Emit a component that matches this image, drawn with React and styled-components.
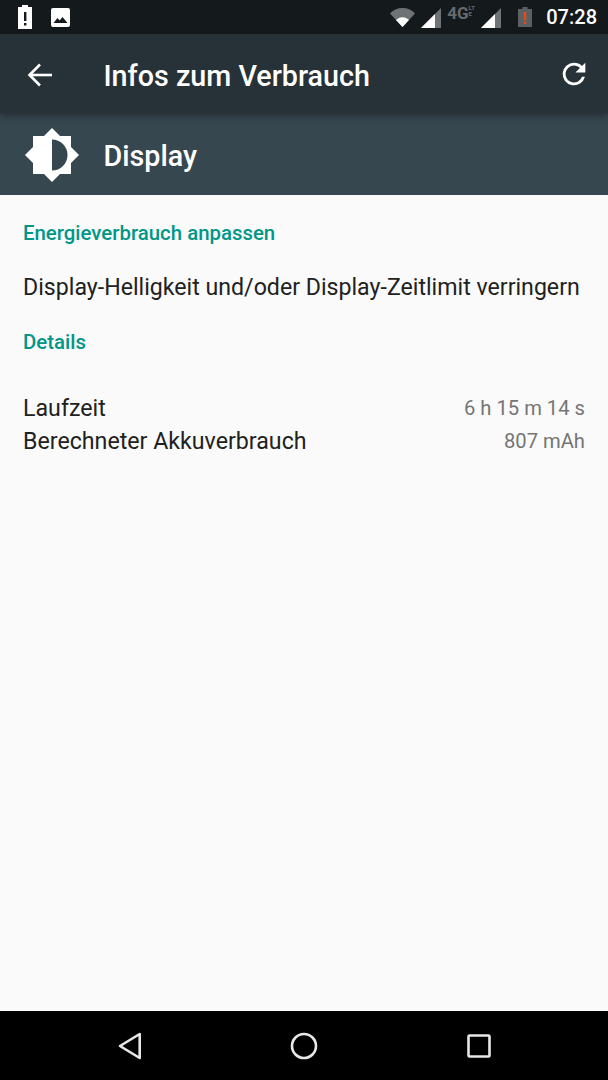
import React from 'react';
import styled, { createGlobalStyle } from 'styled-components';

const GlobalStyle = createGlobalStyle`
  html, body { margin: 0; padding: 0; background: #fafafa; }
  body { font-family: Roboto, "Noto Sans", sans-serif; }
`;

const Screen = styled.div`
  width: 608px;
  height: 1080px;
  display: flex;
  flex-direction: column;
  overflow: hidden;
  background: #fafafa;
`;

const StatusBar = styled.div`
  height: 34px;
  flex: none;
  background: #14191c;
  display: flex;
  align-items: center;
  justify-content: space-between;
  padding: 0 11px 0 17px;
`;

const StatusGroup = styled.div`
  display: flex;
  align-items: center;
  gap: ${(p) => p.$gap || 0}px;
`;

const Clock = styled.span`
  color: #fff;
  font-size: 20px;
  font-weight: 500;
  margin-left: 8px;
`;

const Toolbar = styled.div`
  height: 80px;
  flex: none;
  background: #263238;
  display: flex;
  align-items: center;
  padding: 0 17px 0 27px;
  position: relative;
  z-index: 1;
  box-shadow: 0 3px 6px rgba(0, 0, 0, 0.28);
`;

const Title = styled.h1`
  margin: 3px 0 0 50.5px;
  flex: 1;
  color: #fff;
  font-size: 28.7px;
  font-weight: 500;
`;

const Header = styled.div`
  height: 81px;
  flex: none;
  background: #37474f;
  display: flex;
  align-items: center;
  padding-left: 25px;
`;

const HeaderLabel = styled.span`
  margin: 3px 0 0 24.5px;
  color: #fff;
  font-size: 28.7px;
  font-weight: 500;
`;

const Content = styled.main`
  flex: 1;
  padding: 0 23px;
  display: flex;
  flex-direction: column;
`;

const SectionTitle = styled.h2`
  margin: ${(p) => p.$top}px 0 0;
  color: #009688;
  font-size: 20.4px;
  font-weight: 500;
  line-height: 24px;
`;

const Hint = styled.p`
  margin: 28px 0 0;
  color: #212121;
  font-size: 23.15px;
  line-height: 30px;
`;

const Rows = styled.div`
  margin-top: 39px;
  display: flex;
  flex-direction: column;
  gap: 3px;
`;

const Row = styled.div`
  display: flex;
  justify-content: space-between;
  align-items: center;
  height: 30px;
  font-size: 23.2px;
  color: #212121;
`;

const Value = styled.span`
  color: #757575;
  font-size: 20.2px;
`;

const NavBar = styled.div`
  height: 69px;
  flex: none;
  background: #000;
  display: flex;
  align-items: center;
  justify-content: space-between;
  padding: 0 117px 0 115px;
`;

const AlertBattery = () => (
  <svg width="16" height="24" viewBox="0 0 16 24">
    <path d="M5 0h6v2h4v22H1V2h4z" fill="#fff" />
    <rect x="7" y="7" width="2.4" height="9" fill="#14191c" />
    <rect x="7" y="18" width="2.4" height="2.5" fill="#14191c" />
  </svg>
);

const ImageIcon = () => (
  <svg width="19" height="19" viewBox="0 0 19 19">
    <rect width="19" height="19" rx="2" fill="#fff" />
    <path d="M2.5 15l4-5 2.2 2.4L11.5 9l5 6z" fill="#14191c" />
  </svg>
);

const Wifi = () => (
  <svg width="25" height="20" viewBox="0 0 25 20">
    <path d="M0 6.5C3 3 7.5 1 12.5 1S22 3 25 6.5L12.500 20z" fill="#6f7375" />
    <path d="M6 13c1.600-1.700 4-2.800 6.500-2.800S17.400 11.300 19 13l-6.500 7z" fill="#fff" />
  </svg>
);

const SignalSvg = styled.svg`
  margin-top: 2px;
`;

const Signal = () => (
  <SignalSvg width="20" height="20" viewBox="0 0 20 20">
    <path d="M0 20L20 0v20z" fill="#6f7375" />
    <path d="M0 20L14 6v14z" fill="#fff" />
  </SignalSvg>
);

const NetworkType = styled.span`
  color: #666a6c;
  font-size: 17px;
  font-weight: 700;
  width: 28px;
  margin-bottom: 8px;
  display: flex;
  align-items: flex-start;
`;

const Lte = styled.span`
  font-size: 6px;
  line-height: 6px;
  width: 8px;
  word-break: break-all;
  margin-top: 2px;
`;

const LowBatterySvg = styled.svg`
  margin-left: 11px;
`;

const LowBattery = () => (
  <LowBatterySvg width="14" height="20" viewBox="0 0 14 20">
    <path d="M4.500 0h5v2H14v18H0V2h4.500z" fill="#5c6062" />
    <rect x="5.800" y="5" width="2.400" height="8" fill="#e64a19" />
    <rect x="5.800" y="14.500" width="2.400" height="2.500" fill="#e64a19" />
  </LowBatterySvg>
);

const BackSvg = styled.svg`
  margin-top: 1px;
`;

const BackArrow = () => (
  <BackSvg width="26" height="24" viewBox="0 0 26 24" fill="none" stroke="#fff" strokeWidth="2.600">
    <path d="M25 12H3" />
    <path d="M13 1.500L2.500 12 13 22.500" />
  </BackSvg>
);

const Refresh = () => (
  <svg width="34" height="34" viewBox="0 0 24 24" fill="#fff">
    <path d="M17.650 6.350A7.958 7.958 0 0 0 12 4a8 8 0 1 0 7.730 10h-2.080A6 6 0 1 1 12 6c1.660 0 3.140.69 4.220 1.780L13 11h7V4l-2.350 2.350z" />
  </svg>
);

const Brightness = () => (
  <svg width="54" height="54" viewBox="0 0 54 54">
    <path d="M27 0l8 8h11v11l8 8-8 8v11H35l-8 8-8-8H8V35l-8-8 8-8V8h11z" fill="#fff" />
    <path d="M27 11.500a15.500 15.500 0 0 1 0 31z" fill="#37474f" />
  </svg>
);

const NavBack = () => (
  <svg width="26" height="28" viewBox="0 0 26 28" fill="none" stroke="#e8e8e8" strokeWidth="2.600" strokeLinejoin="round">
    <path d="M24.700 2v24L5 14z" />
  </svg>
);

const NavHome = () => (
  <svg width="28" height="28" viewBox="0 0 28 28" fill="none" stroke="#e8e8e8" strokeWidth="2.600">
    <circle cx="14" cy="14" r="12" />
  </svg>
);

const NavRecent = () => (
  <svg width="24" height="24" viewBox="0 0 24 24" fill="none" stroke="#e8e8e8" strokeWidth="2.600" strokeLinejoin="round">
    <rect x="1.500" y="1.500" width="21" height="21" rx="1" />
  </svg>
);

export default function App() {
  return (
    <Screen>
      <GlobalStyle />
      <StatusBar>
        <StatusGroup $gap={18}>
          <AlertBattery />
          <ImageIcon />
        </StatusGroup>
        <StatusGroup $gap={6}>
          <Wifi />
          <Signal />
          <NetworkType>4G<Lte>LTE</Lte></NetworkType>
          <Signal />
          <LowBattery />
          <Clock>07:28</Clock>
        </StatusGroup>
      </StatusBar>
      <Toolbar>
        <BackArrow />
        <Title>Infos zum Verbrauch</Title>
        <Refresh />
      </Toolbar>
      <Header>
        <Brightness />
        <HeaderLabel>Display</HeaderLabel>
      </Header>
      <Content>
        <SectionTitle $top={26}>Energieverbrauch anpassen</SectionTitle>
        <Hint>Display-Helligkeit und/oder Display-Zeitlimit verringern</Hint>
        <SectionTitle $top={27}>Details</SectionTitle>
        <Rows>
          <Row>Laufzeit<Value>6 h 15 m 14 s</Value></Row>
          <Row>Berechneter Akkuverbrauch<Value>807 mAh</Value></Row>
        </Rows>
      </Content>
      <NavBar>
        <NavBack />
        <NavHome />
        <NavRecent />
      </NavBar>
    </Screen>
  );
}
